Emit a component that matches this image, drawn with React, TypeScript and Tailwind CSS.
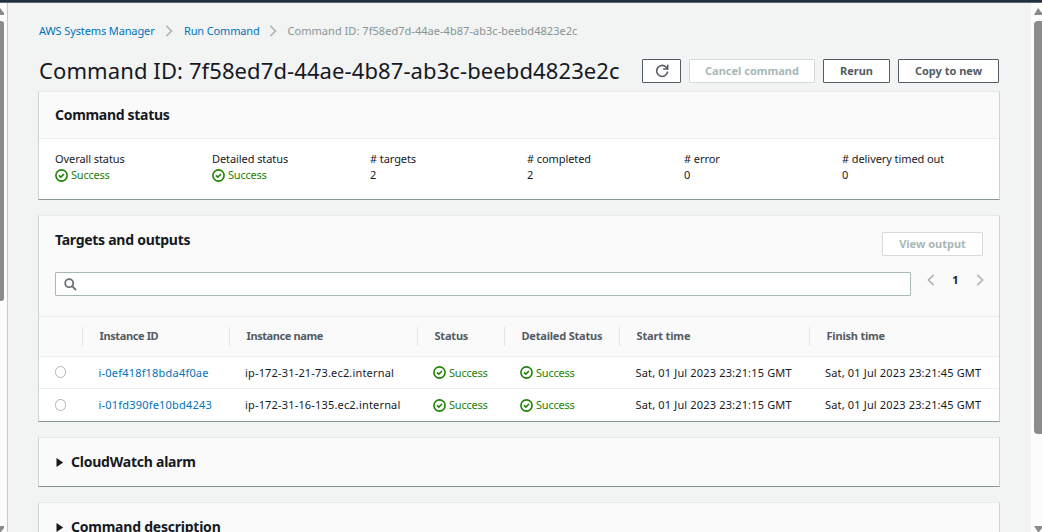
import type { ReactNode } from "react";

function SuccessIcon() {
  return (
    <svg width="13" height="13" viewBox="0 0 13 13" fill="none" stroke="#1d8102" strokeWidth="1.6" className="shrink-0">
      <circle cx="6.5" cy="6.5" r="5.6" />
      <path d="M3.9 6.4 5.8 8.1 9 5" />
    </svg>
  );
}

function Success({ className = "" }: { className?: string }) {
  return (
    <span className={`flex h-4 items-center gap-[3px] text-[#1d8102] ${className}`}>
      <SuccessIcon />
      <span className="tracking-[-0.22px]">Success</span>
    </span>
  );
}

function Chevron({ flip = false, className = "" }: { flip?: boolean; className?: string }) {
  return (
    <svg width="8" height="12" viewBox="0 0 8 12" fill="none" stroke="#aab7b8" strokeWidth="1.7" className={`shrink-0 ${className}`}>
      <path d={flip ? "M6.7 .8 1.5 6 6.7 11.2" : "M1.3 .8 6.5 6 1.3 11.2"} />
    </svg>
  );
}

function Card({ children, className = "" }: { children?: ReactNode; className?: string }) {
  return (
    <section className={`w-[962px] shrink-0 border-x border-t border-b border-x-[#ccd3d3] border-t-[#e6eaea] border-b-[#879596] bg-[#fafafa] ${className}`}>
      {children}
    </section>
  );
}

function Button({ children, disabled = false, className = "" }: { children: ReactNode; disabled?: boolean; className?: string }) {
  return (
    <button
      className={`flex h-6 shrink-0 items-center justify-center rounded-[1px] border text-[11px] font-bold ${
        disabled ? "border-[#d5dbdb] text-[#aab7b8]" : "border-[#545b64] text-[#545b64]"
      } bg-white ${className}`}
    >
      {children}
    </button>
  );
}

const stats: { label: string; value?: string; width: string }[] = [
  { label: "Overall status", width: "w-[157px]" },
  { label: "Detailed status", width: "w-[158px]" },
  { label: "# targets", value: "2", width: "w-[157px]" },
  { label: "# completed", value: "2", width: "w-[157px]" },
  { label: "# error", value: "0", width: "w-[158px]" },
  { label: "# delivery timed out", value: "0", width: "w-[140px]" },
];

const headers = [
  { label: "", tracking: "" },
  { label: "Instance ID", tracking: "tracking-[-0.38px]" },
  { label: "Instance name", tracking: "tracking-[-0.4px]" },
  { label: "Status", tracking: "tracking-[-0.2px]" },
  { label: "Detailed Status", tracking: "tracking-[-0.2px]" },
  { label: "Start time", tracking: "tracking-[-0.15px]" },
  { label: "Finish time", tracking: "tracking-[-0.2px]" },
];

const rows = [
  { id: "i-0ef418f18bda4f0ae", name: "ip-172-31-21-73.ec2.internal" },
  { id: "i-01fd390fe10bd4243", name: "ip-172-31-16-135.ec2.internal" },
];

const grid = "grid grid-cols-[44px_147px_188px_87px_115px_190px_189px]";

function Expandable({ title }: { title: string }) {
  return (
    <div className="flex h-12 items-center pl-4">
      <svg width="9" height="9" viewBox="0 0 9 9" className="mr-[7px] shrink-0">
        <path d="M1.5 0 8.2 4.5 1.5 9Z" fill="#16191f" />
      </svg>
      <h2 className="text-[14px] font-bold tracking-[-0.23px]">{title}</h2>
    </div>
  );
}

export default function App() {
  return (
    <div className="flex h-[532px] w-[1042px] flex-col overflow-hidden bg-[#f2f3f3] font-['Noto_Sans',sans-serif] text-[11px] leading-4 text-[#16191f]">
      <div className="h-[3px] shrink-0 border-b border-[#5b6470] bg-[#232f3e]" />
      <div className="flex min-h-0 flex-1">
        <div className="flex w-2 shrink-0 flex-col border-r border-[#c4cbcb] bg-[#fcfcfc]">
          <svg width="4" height="7" viewBox="0 0 4 7" className="mt-[5px] shrink-0">
            <path d="M0 0 4 5V7H0Z" fill="#8b8b8b" />
          </svg>
          <div className="mt-[6px] h-[280px] w-1 shrink-0 rounded-r-[3px] bg-[#8b8b8b]" />
          <svg width="4" height="6" viewBox="0 0 4 6" className="mt-auto shrink-0">
            <path d="M0 0H4V2L1 6H0Z" fill="#8b8b8b" />
          </svg>
        </div>

        <main className="flex min-w-0 flex-1 flex-col overflow-hidden pl-[30px]">
          <nav className="mt-5 flex h-4 shrink-0 items-center pl-px text-[#0073bb]">
            <a className="w-[117px] whitespace-nowrap tracking-[-0.12px]">AWS Systems Manager</a>
            <Chevron className="mr-[11px] ml-[9px]" />
            <a className="w-[75px] whitespace-nowrap tracking-[-0.15px]">Run Command</a>
            <Chevron className="mr-[11px] ml-[9.5px]" />
            <span className="whitespace-nowrap tracking-[0.04px] text-[#879596]">Command ID: 7f58ed7d-44ae-4b87-ab3c-beebd4823e2c</span>
          </nav>

          <header className="mt-5 flex h-6 w-[961px] shrink-0 items-center gap-2">
            <h1 className="-mt-[2px] flex-1 whitespace-nowrap pl-px text-[22px] leading-6 tracking-[0.1px]">Command ID: 7f58ed7d-44ae-4b87-ab3c-beebd4823e2c</h1>
            <Button className="w-[39px]">
              <svg width="14" height="14" viewBox="0 0 14 14" fill="none" stroke="#545b64" strokeWidth="1.6" className="-mt-px">
                <path d="M12.6 7.6A5.5 5.5 0 1 1 11 3L12.6 4.7" />
                <path d="M12.7.7V5H8.2" />
              </svg>
            </Button>
            <Button disabled className="w-[126px]">Cancel command</Button>
            <Button className="w-[67px]">Rerun</Button>
            <Button className="w-[101px]">Copy to new</Button>
          </header>

          <Card className="mt-2 h-[109px]">
            <div className="flex h-[47px] items-center border-b border-[#eaeded] pl-4">
              <h2 className="text-[14px] font-bold tracking-[-0.3px]">Command status</h2>
            </div>
            <div className="flex h-[60px] bg-white pt-3 pl-4">
              {stats.map((s) => (
                <div key={s.label} className={`${s.width} whitespace-nowrap tracking-[-0.08px]`}>
                  <div>{s.label}</div>
                  {s.value ? <div>{s.value}</div> : <Success />}
                </div>
              ))}
            </div>
          </Card>

          <Card className="mt-[15px] h-[207px]">
            <div className="flex h-[56px] items-start justify-between pr-4 pl-4">
              <h2 className="mt-4 text-[14px] font-bold tracking-[-0.27px]">Targets and outputs</h2>
              <Button disabled className="mt-4 w-[101px]">View output</Button>
            </div>
            <div className="flex h-[44px] items-start pr-[15px] pl-4">
              <div className="flex h-6 w-[856px] items-center rounded-[1px] border border-[#aab7b8] bg-white pl-2">
                <svg width="13" height="13" viewBox="0 0 13 13" fill="none" stroke="#687078" strokeWidth="1.8">
                  <circle cx="5.2" cy="5.2" r="4" />
                  <path d="m8.1 8.1 3.9 3.9" />
                </svg>
              </div>
              <div className="flex h-4 flex-1 items-center justify-between pl-4">
                <Chevron flip />
                <b>1</b>
                <Chevron />
              </div>
            </div>
            <div className={`${grid} h-[41px] items-center border-y border-[#eaeded] font-bold text-[#545b64]`}>
              {headers.map((h, i) => (
                <div key={i} className={`flex h-[19px] items-center whitespace-nowrap pb-[2px] pl-[16.5px] ${h.tracking} ${i < 6 ? "border-r border-[#e0e4e4]" : ""}`}>
                  {h.label}
                </div>
              ))}
            </div>
            {rows.map((r, i) => (
              <div key={r.id} className={`${grid} h-8 items-center whitespace-nowrap bg-white ${i === 0 ? "border-b border-[#eaeded]" : ""}`}>
                <span className="-mt-px ml-4 h-3 w-[11px] rounded-full border border-[#aab7b8]" />
                <a className="pl-[15.5px] tracking-[0.2px] text-[#0073bb]">{r.id}</a>
                <span className="pl-[15px] tracking-[0.17px]">{r.name}</span>
                <Success className="pl-[15px]" />
                <Success className="pl-[15px]" />
                <span className="pl-[15.5px] tracking-[0.16px]">Sat, 01 Jul 2023 23:21:15 GMT</span>
                <span className="pl-[15px] tracking-[0.16px]">Sat, 01 Jul 2023 23:21:45 GMT</span>
              </div>
            ))}
          </Card>

          <Card className="mt-[15px] h-[50px]">
            <Expandable title="CloudWatch alarm" />
          </Card>
          <Card className="mt-[15px] h-[50px]">
            <Expandable title="Command description" />
          </Card>
        </main>

        <div className="flex w-[11px] shrink-0 flex-col items-end bg-[#fcfcfc]">
          <svg width="8" height="7" viewBox="0 0 8 7" className="mt-[5px] shrink-0">
            <path d="M4 0 8 5V7H0Z" fill="#8b8b8b" />
          </svg>
          <div className="mt-[6px] h-[413px] w-2 shrink-0 rounded-l-[4px] bg-[#8b8b8b]" />
          <svg width="8" height="6" viewBox="0 0 8 6" className="mt-auto shrink-0">
            <path d="M0 0H8V2L5 6H4Z" fill="#8b8b8b" />
          </svg>
        </div>
      </div>
    </div>
  );
}
